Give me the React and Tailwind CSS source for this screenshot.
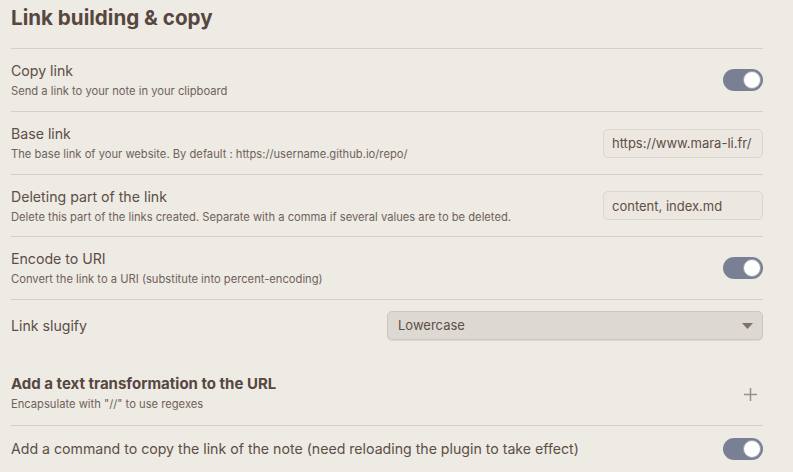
import React, { useState } from "react";

// Small toggle, the one Obsidian draws for boolean settings
const Toggle = ({ on, onChange }) => (
  <button
    onClick={() => onChange(!on)}
    className={`relative w-[40px] h-[22px] rounded-full shrink-0 ${on ? "bg-[#7a8093]" : "bg-[#cfc9c2]"}`}
  >
    <span
      className={`absolute top-[2px] w-[18px] h-[18px] rounded-full bg-white border border-[#9aa0b0] ${on ? "left-[20px]" : "left-[2px]"}`}
    />
  </button>
);

const Row = ({ title, desc, height, children }) => (
  <div className={`flex items-center justify-between border-t border-[#d6d0c9] ${height}`}>
    <div className="flex flex-col gap-[4px]">
      <div className="text-[14.15px] leading-[18px] text-[#5c4f47]">{title}</div>
      {desc && <div className="text-[11.2px] leading-[14px] text-[#6e625a]">{desc}</div>}
    </div>
    {children}
  </div>
);

const TextInput = ({ value, onChange }) => (
  <input
    value={value}
    onChange={(e) => onChange(e.target.value)}
    className="w-[160px] h-[29px] px-[8px] rounded-[5px] border border-[#dcd6cf] bg-[#ece7e0] text-[13px] text-[#5c4f47] outline-none"
  />
);

export default function App() {
  const [copyLink, setCopyLink] = useState(true);
  const [baseLink, setBaseLink] = useState("https://www.mara-li.fr/");
  const [removePart, setRemovePart] = useState("content, index.md");
  const [encode, setEncode] = useState(true);
  const [slugify, setSlugify] = useState("Lowercase");
  const [command, setCommand] = useState(true);

  return (
    <div
      className="w-[793px] h-[472px] overflow-hidden bg-[#eeeae4] pl-[11px] pr-[30px]"
      style={{ fontFamily: "Inter, 'Noto Sans', sans-serif" }}
    >
      <h2 className="h-[48px] pt-[6px] text-[20.6px] leading-[24px] font-bold text-[#56473f]">
        Link building &amp; copy
      </h2>

      <Row title="Copy link" desc="Send a link to your note in your clipboard" height="h-[63px]">
        <Toggle on={copyLink} onChange={setCopyLink} />
      </Row>

      <Row
        title="Base link"
        desc="The base link of your website. By default : https://username.github.io/repo/"
        height="h-[63px]"
      >
        <TextInput value={baseLink} onChange={setBaseLink} />
      </Row>

      <Row
        title="Deleting part of the link"
        desc="Delete this part of the links created. Separate with a comma if several values are to be deleted."
        height="h-[62px]"
      >
        <TextInput value={removePart} onChange={setRemovePart} />
      </Row>

      <Row
        title="Encode to URI"
        desc="Convert the link to a URI (substitute into percent-encoding)"
        height="h-[63px]"
      >
        <Toggle on={encode} onChange={setEncode} />
      </Row>

      <Row title="Link slugify" height="h-[52px]">
        <div className="relative w-[376px] h-[29px]">
          <select
            value={slugify}
            onChange={(e) => setSlugify(e.target.value)}
            className="appearance-none w-full h-full pl-[10px] rounded-[5px] border border-[#cdc7c0] bg-[#ddd8d1] shadow-[0_1px_1px_rgba(0,0,0,0.08)] text-[13px] text-[#5c4f47] outline-none"
          >
            <option>Lowercase</option>
            <option>Strict</option>
            <option>Disable</option>
          </select>
          <svg className="absolute right-[10px] top-[12px] pointer-events-none" width="11" height="6" viewBox="0 0 11 6">
            <path d="M0 0h11L5.5 6z" fill="#7d726b" />
          </svg>
        </div>
      </Row>

      {/* heading-style item without a top border */}
      <div className="flex items-start justify-between h-[74px] pt-[24px]">
        <div className="flex flex-col gap-[4px]">
          <div className="text-[15px] leading-[18px] font-bold text-[#56473f]">
            Add a text transformation to the URL
          </div>
          <div className="text-[11.2px] leading-[14px] text-[#6e625a]">
            Encapsulate with "//" to use regexes
          </div>
        </div>
        <button className="mt-[13px] mr-[6px] text-[#9a8f88]">
          <svg width="13" height="13" viewBox="0 0 13 13">
            <path d="M6.5 0v13M0 6.5h13" stroke="currentColor" strokeWidth="1.5" />
          </svg>
        </button>
      </div>

      <Row
        title="Add a command to copy the link of the note (need reloading the plugin to take effect)"
        height="h-[47px]"
      >
        <Toggle on={command} onChange={setCommand} />
      </Row>
    </div>
  );
}
